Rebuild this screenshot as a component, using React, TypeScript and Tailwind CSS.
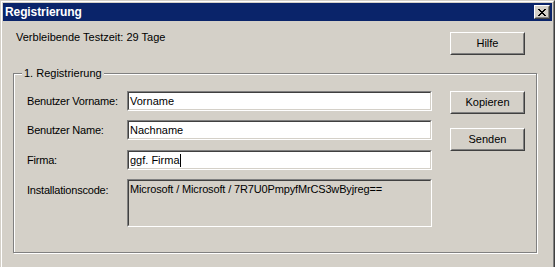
import React from 'react';

const FONT = "font-['Liberation_Sans',Arial,sans-serif]";

function Raised({ label, className = '' }: { label: string; className?: string }) {
  return (
    <div className={`border border-t-white border-l-white border-r-[#404040] border-b-[#404040] ${className}`}>
      <div className="h-full border border-t-[#d4d0c8] border-l-[#d4d0c8] border-r-[#808080] border-b-[#808080] flex items-center justify-center text-[11px] leading-[13px] text-black">
        {label}
      </div>
    </div>
  );
}

function Sunken({ children, className = '', inner = '' }: { children?: React.ReactNode; className?: string; inner?: string }) {
  return (
    <div className={`border border-t-[#808080] border-l-[#808080] border-r-white border-b-white ${className}`}>
      <div className={`h-full border border-t-[#404040] border-l-[#404040] border-r-[#d4d0c8] border-b-[#d4d0c8] ${inner}`}>
        {children}
      </div>
    </div>
  );
}

function CloseGlyph() {
  // 8x7 pixel X
  const rows = ['XX....XX', '.XX..XX.', '..XXXX..', '...XX...', '..XXXX..', '.XX..XX.', 'XX....XX'];
  return (
    <svg width="8" height="7" viewBox="0 0 8 7" shapeRendering="crispEdges">
      {rows.flatMap((r, y) =>
        r.split('').map((c, x) => (c === 'X' ? <rect key={`${x}-${y}`} x={x} y={y} width="1" height="1" fill="#000" /> : null))
      )}
    </svg>
  );
}

function Field({ label, value, caret }: { label: string; value: string; caret?: boolean }) {
  return (
    <div className="flex items-center h-[20px]">
      <div className="w-[100px] text-[11px] leading-[13px] tracking-[-0.2px]">{label}</div>
      <Sunken className="w-[305px] h-[20px] bg-white" inner="flex items-center pl-px">
        <span className="text-[11px] leading-[13px] whitespace-pre">{value}</span>
        {caret && <span className="inline-block w-px h-[13px] bg-black" />}
      </Sunken>
    </div>
  );
}

export default function App() {
  return (
    <div className={`w-[555px] h-[267px] overflow-hidden bg-[#d4d0c8] text-black ${FONT}`}>
      <div className="h-full border-l border-t border-r border-l-[#d4d0c8] border-t-[#d4d0c8] border-r-[#404040]">
        <div className="h-full border-l border-t border-r border-l-white border-t-white border-r-[#808080] px-px pt-px">
          {/* Title bar */}
          <div className="h-[18px] bg-[#0a246a] flex items-center justify-between pl-[2px] pr-[2px]">
            <span className="text-white font-bold text-[12px] leading-[14px] tracking-[-0.1px]">Registrierung</span>
            <div className="w-[16px] h-[14px] border border-t-white border-l-white border-r-[#404040] border-b-[#404040]">
              <div className="h-full border border-t-[#d4d0c8] border-l-[#d4d0c8] border-r-[#808080] border-b-[#808080] bg-[#d4d0c8] flex items-center justify-center">
                <CloseGlyph />
              </div>
            </div>
          </div>

          {/* Content */}
          <div className="pl-[10px]">
            <div className="mt-[11px] w-[524px] flex items-start justify-between">
              <span className="pl-[3px] -mt-px text-[11px] leading-[13px]">Verbleibende Testzeit: 29 Tage</span>
              <Raised label="Hilfe" className="w-[75px] h-[23px] mr-[12px]" />
            </div>

            <div className="relative mt-[18px] w-[524px] h-[180px] border border-[#808080] shadow-[inset_1px_1px_0_#fff,1px_1px_0_#fff] pt-[17px] pl-[13px] flex">
              <span className="absolute left-[8px] -top-[7px] px-[2px] bg-[#d4d0c8] text-[11px] leading-[13px]">1. Registrierung</span>

              <div className="flex flex-col">
                <Field label="Benutzer Vorname:" value="Vorname" />
                <div className="mt-[9px]">
                  <Field label="Benutzer Name:" value="Nachname" />
                </div>
                <div className="mt-[10px]">
                  <Field label="Firma:" value="ggf. Firma" caret />
                </div>
                <div className="mt-[9px] flex items-start">
                  <div className="w-[100px] pt-[5px] text-[11px] leading-[13px] tracking-[-0.2px]">Installationscode:</div>
                  <Sunken className="w-[305px] h-[48px]" inner="pl-px pt-[2px] text-[11px] leading-[13px] tracking-[-0.15px]">
                    Microsoft / Microsoft / 7R7U0PmpyfMrCS3wByjreg==
                  </Sunken>
                </div>
              </div>

              <div className="ml-[18px] flex flex-col">
                <Raised label="Kopieren" className="w-[75px] h-[23px]" />
                <Raised label="Senden" className="w-[75px] h-[23px] mt-[14px]" />
              </div>
            </div>
          </div>
        </div>
      </div>
    </div>
  );
}
